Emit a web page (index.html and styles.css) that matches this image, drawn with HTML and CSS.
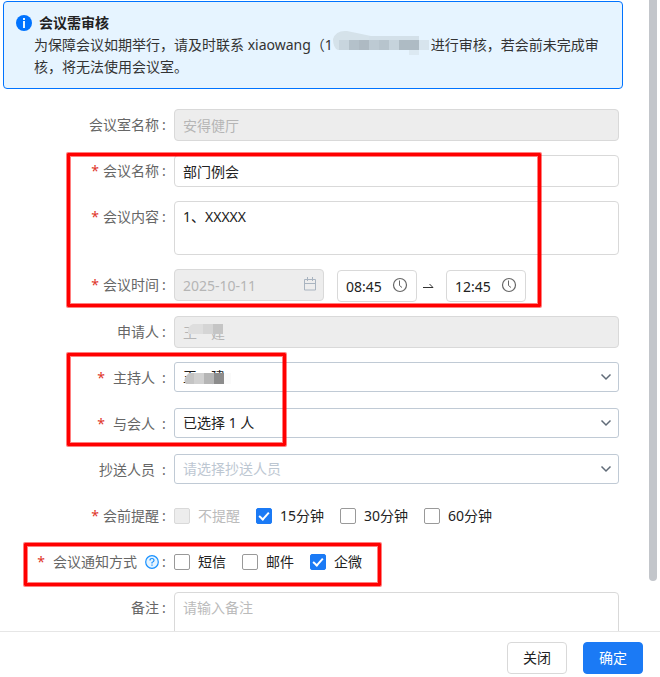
FILE: index.html
```
<!DOCTYPE html>
<html lang="zh-CN">
<head>
  <meta charset="UTF-8">
  <meta name="viewport" content="width=device-width, initial-scale=1.0">
  <title>会议预定</title>
  <link rel="stylesheet" href="styles.css">
</head>
<body>
  <form class="dialog">
    <div class="dialog-body">
      <div class="content">
        <section class="alert">
          <h4 class="alert-title">
            <svg width="16" height="16" viewBox="0 0 16 16"><circle cx="8" cy="8" r="8" fill="#0073ff"/><rect x="7" y="3" width="2" height="2" fill="#e6f4ff"/><rect x="7" y="6" width="2" height="7" fill="#e6f4ff"/></svg>
            会议需审核
          </h4>
          <div class="alert-text">
            为保障会议如期举行，请及时联系 xiaowang（1　　　　　　　进行审核，若会前未完成审核，将无法使用会议室。
            <svg class="mosaic-phone" width="96" height="26" viewBox="0 0 96 26">
              <path d="M0 9Q3 0 14 1L38 6V20H5Q0 18 0 9Z" fill="#d5e2ea"/>
              <rect x="6" y="10" width="10" height="10" fill="#c8d5de"/>
              <rect x="16" y="10" width="10" height="10" fill="#b4c1ca"/>
              <rect x="26" y="10" width="10" height="10" fill="#aebac3"/>
              <rect x="36" y="6" width="50" height="14" fill="#d3e0e9"/>
              <rect x="36" y="10" width="10" height="10" fill="#bdcad3"/>
              <rect x="46" y="10" width="10" height="10" fill="#b7c4cd"/>
              <rect x="56" y="10" width="10" height="10" fill="#c6d3dc"/>
              <rect x="66" y="10" width="20" height="10" fill="#aebbc4"/>
              <rect x="76" y="20" width="10" height="5" fill="#dce9f2"/>
              <rect x="86" y="10" width="10" height="10" fill="#d7e4ed"/>
            </svg>
          </div>
        </section>

        <div class="form">
          <div class="row">
            <label class="label" for="room">会议室名称<i>:</i></label>
            <input class="field" type="text" id="room" value="安得健厅" disabled>
          </div>

          <div class="group mark-basic">
            <div class="row">
              <label class="label required" for="name">会议名称<i>:</i></label>
              <input class="field" type="text" id="name" value="部门例会">
            </div>
            <div class="row">
              <label class="label required" for="content">会议内容<i>:</i></label>
              <textarea class="field" id="content">1、XXXXX</textarea>
            </div>
            <div class="row row-time">
              <label class="label required" for="date">会议时间<i>:</i></label>
              <div class="times">
                <span class="with-icon date">
                  <input class="field" type="text" id="date" value="2025-10-11" disabled>
                  <svg width="14" height="14" viewBox="0 0 14 14" fill="none" stroke="#a9b4c0"><path d="M1.500 2.500h11v10.500h-11zM1.500 6.500h11M4.500 0v4M9.500 0v4"/></svg>
                </span>
                <span class="with-icon time">
                  <input class="field" type="text" aria-label="开始时间" value="08:45">
                  <svg width="16" height="16" viewBox="0 0 16 16" fill="none" stroke="#666"><circle cx="8" cy="8" r="6.5" stroke-width="1.2"/><path d="M7.5 3.5v5l2.5 2"/></svg>
                </span>
                <svg class="arrow" width="11" height="6" viewBox="0 0 11 6"><path d="M0 4.5h10L6.5 1" fill="none" stroke="#333"/></svg>
                <span class="with-icon time">
                  <input class="field" type="text" aria-label="结束时间" value="12:45">
                  <svg width="16" height="16" viewBox="0 0 16 16" fill="none" stroke="#666"><circle cx="8" cy="8" r="6.5" stroke-width="1.2"/><path d="M7.5 3.5v5l2.5 2"/></svg>
                </span>
              </div>
            </div>
          </div>

          <div class="row">
            <label class="label" for="applicant">申请人<i>:</i></label>
            <span class="with-icon">
              <input class="field" type="text" id="applicant" value="王　建" disabled>
              <svg class="mosaic-name" width="48" height="12" viewBox="0 0 48 12">
                <path d="M10 0H20V10H5Q4 2 10 0Z" fill="#dedede"/>
                <rect x="20" width="10" height="10" fill="#d5d5d5"/>
                <rect x="30" width="10" height="10" fill="#c5c5c5"/>
                <rect x="40" width="7" height="10" fill="#ececec"/>
              </svg>
            </span>
          </div>

          <div class="group mark-people">
            <div class="row">
              <label class="label required spaced" for="host">主持人<i>:</i></label>
              <span class="with-icon">
                <select class="field" id="host"><option>王　建</option></select>
                <svg class="mosaic-name" width="48" height="12" viewBox="0 0 48 12">
                  <path d="M6 1H20V12H3Q-1 7 6 1Z" fill="#c4c4c4"/>
                  <rect x="11" y="1" width="10" height="11" fill="#d0d0d0"/>
                  <rect x="21" y="1" width="10" height="11" fill="#b5b5b5"/>
                  <rect x="31" y="1" width="10" height="11" fill="#8c8c8c"/>
                  <rect x="41" y="1" width="7" height="11" fill="#fafafa"/>
                </svg>
                <svg class="chevron" width="12" height="8" viewBox="0 0 12 8"><path d="M1.5 1.5L6 6l4.500-4.500" fill="none" stroke="#606b78" stroke-width="1.5"/></svg>
              </span>
            </div>
            <div class="row">
              <label class="label required spaced" for="members">与会人<i>:</i></label>
              <span class="with-icon">
                <select class="field" id="members"><option>已选择 1 人</option></select>
                <svg class="chevron" width="12" height="8" viewBox="0 0 12 8"><path d="M1.5 1.5L6 6l4.500-4.500" fill="none" stroke="#606b78" stroke-width="1.5"/></svg>
              </span>
            </div>
          </div>

          <div class="row">
            <label class="label spaced" for="cc">抄送人员<i>:</i></label>
            <span class="with-icon">
              <select class="field empty" id="cc"><option>请选择抄送人员</option></select>
              <svg class="chevron" width="12" height="8" viewBox="0 0 12 8"><path d="M1.5 1.5L6 6l4.500-4.500" fill="none" stroke="#606b78" stroke-width="1.5"/></svg>
            </span>
          </div>

          <div class="row" role="group" aria-labelledby="remind">
            <span class="label required" id="remind">会前提醒<i>:</i></span>
            <div class="checks">
              <label class="off"><input type="checkbox" disabled>不提醒</label>
              <label><input type="checkbox" checked>15分钟</label>
              <label><input type="checkbox">30分钟</label>
              <label><input type="checkbox">60分钟</label>
            </div>
          </div>

          <div class="group mark-notify">
            <div class="row" role="group" aria-labelledby="notify">
              <span class="label required notify" id="notify">会议通知方式
                <svg width="14" height="14" viewBox="0 0 14 14" fill="none" stroke="#1890ff"><circle cx="7" cy="7" r="6.300" fill="#e6f4ff" stroke-width="1.2"/><path d="M5 5.500Q5 3.500 7 3.500T9 5.500Q9 6.500 7 7.500V8.500M7 9.500v1.200" stroke-width="1.2"/></svg><i>:</i></span>
              <div class="checks">
                <label><input type="checkbox">短信</label>
                <label><input type="checkbox">邮件</label>
                <label><input type="checkbox" checked>企微</label>
              </div>
            </div>
          </div>

          <div class="row">
            <label class="label" for="remark">备注<i>:</i></label>
            <textarea class="field" id="remark" placeholder="请输入备注"></textarea>
          </div>
        </div>
      </div>
      <div class="scrollbar"></div>
    </div>

    <footer class="dialog-footer">
      <button type="button">关闭</button>
      <button type="submit" class="primary">确定</button>
    </footer>
  </form>
</body>
</html>
```
FILE: styles.css
```
* {
  box-sizing: border-box;
}
body {
  margin: 0;
  background: #fff;
  color: #222;
}
body, input, textarea, select, button {
  font-family: "Noto Sans", "Noto Sans CJK SC", sans-serif;
  font-size: 14px;
  line-height: 22px;
}
.dialog {
  display: flex;
  flex-direction: column;
  height: 100vh;
}
.dialog-body {
  flex: 1;
  min-height: 0;
  display: flex;
  gap: 26px;
  padding: 0 3px;
  overflow: hidden;
}
.content {
  flex: 1;
  padding-top: 1px;
}
.scrollbar {
  width: 8px;
  height: 92%;
  background: #c3c6cb;
  border-radius: 0 0 4px 4px;
}

/* alert */
.alert {
  padding: 10px 12px;
  border: 1px solid #0073ff;
  border-radius: 4px;
  background: #e6f4ff;
}
.alert-title {
  display: flex;
  align-items: center;
  gap: 7px;
  margin: 0;
  font-weight: bold;
}
.alert-text {
  position: relative;
  padding-left: 18px;
  color: #333;
}
.mosaic-phone {
  position: absolute;
  top: -4px;
  left: 317px;
}

/* form rows */
.form {
  padding: 20px 4px 0 0;
}
.form, .group {
  display: flex;
  flex-direction: column;
  gap: 14px;
}
.row {
  display: flex;
  gap: 8px;
  min-height: 32px;
}
.row-time {
  min-height: 33px;
}
.label {
  flex: none;
  display: flex;
  justify-content: flex-end;
  width: 163px;
  line-height: 32px;
  color: #666;
}
.label i {
  width: 4px;
  margin-left: 3px;
  font-style: normal;
}
.required::before {
  content: "*";
  margin-right: 4px;
  color: #e0352b;
}
.spaced i {
  margin-left: 7px;
}
.spaced.required::before {
  margin-right: 8px;
}
.notify {
  align-items: center;
}
.notify::before {
  margin-right: 8px;
}
.notify svg {
  margin-left: 8px;
}

.field {
  width: 100%;
  height: 32px;
  padding: 4px 8px;
  border: 1px solid #d9d9d9;
  border-radius: 4px;
  background: #fff;
  color: #222;
}
.field:disabled {
  background: #ededed;
  color: #b5b5b5;
}
.field::placeholder {
  color: #bbb;
}
textarea.field {
  display: block;
  height: 54px;
  resize: none;
}
select.field {
  appearance: none;
  height: 30px;
  padding: 3px 8px;
  border-color: #c0cad5;
  border-radius: 3px;
}
select.empty {
  color: #bdc7d2;
}
.with-icon {
  position: relative;
  flex: 1;
}
.with-icon svg {
  position: absolute;
  top: 8px;
  right: 7px;
}
.with-icon .chevron {
  top: 11px;
}
.with-icon .mosaic-name {
  left: 9px;
  right: auto;
}
.with-icon select + .mosaic-name {
  top: 10px;
}
.times {
  display: flex;
  align-items: flex-start;
  gap: 13px;
}
.date {
  flex: none;
  width: 150px;
}
.time {
  flex: none;
  width: 80px;
  margin-top: 1px;
}
.with-icon.time svg {
  top: 7px;
  right: 9px;
}
.arrow {
  align-self: center;
  margin: 0 -1px 0 -7px;
}

.checks {
  display: flex;
  align-items: center;
  gap: 16px;
}
.checks label {
  display: flex;
  align-items: center;
  gap: 8px;
}
.checks .off {
  color: #bbb;
}
.checks input {
  appearance: none;
  display: flex;
  justify-content: center;
  width: 16px;
  height: 16px;
  margin: 0;
  border: 1px solid #999;
  border-radius: 2px;
}
.checks input:disabled {
  border-color: #d9d9d9;
  background: #ededed;
}
.checks input:checked {
  border-color: #1b7af5;
  background: #1b7af5;
}
.checks input:checked::after {
  content: "";
  box-sizing: border-box;
  width: 6px;
  height: 10px;
  margin-top: 1px;
  border: solid #fff;
  border-width: 0 2px 2px 0;
  transform: rotate(42deg);
}

/* red frames over the steps to fill in */
.group {
  position: relative;
}
.group::after {
  content: "";
  position: absolute;
  border: 3px solid #f00;
  border-radius: 1px;
  box-shadow: 0 0 0 1px rgba(255, 0, 0, 0.5), inset 0 0 0 1px rgba(255, 0, 0, 0.5);
  pointer-events: none;
}
.mark-basic::after {
  inset: -2px 78px -5px 64px;
}
.mark-people::after {
  inset: -9px 333px -6px 64px;
}
.mark-notify::after {
  inset: -3px 238px -8px 21px;
}

.dialog-footer {
  display: flex;
  justify-content: flex-end;
  gap: 16px;
  padding: 10px 17px 3px;
  border-top: 1px solid #e6e6e6;
}
button {
  width: 60px;
  height: 32px;
  padding: 0;
  border: 1px solid #d9d9d9;
  border-radius: 4px;
  background: #fff;
  color: #222;
  cursor: pointer;
}
button.primary {
  border-color: #1b7af5;
  background: #1b7af5;
  color: #fff;
}
```
